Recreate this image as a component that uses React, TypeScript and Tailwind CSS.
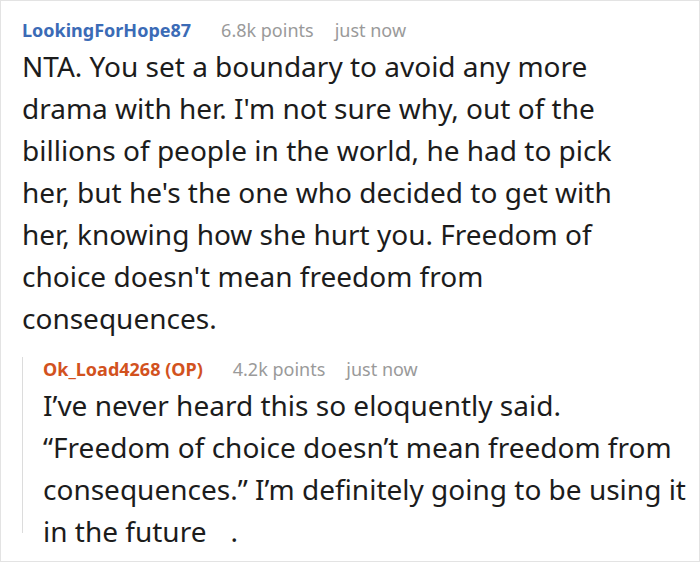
const first = [
  "NTA. You set a boundary to avoid any more",
  "drama with her. I'm not sure why, out of the",
  "billions of people in the world, he had to pick",
  "her, but he's the one who decided to get with",
  "her, knowing how she hurt you. Freedom of",
  "choice doesn't mean freedom from",
  "consequences.",
]

const reply = [
  "I’ve never heard this so eloquently said.",
  "“Freedom of choice doesn’t mean freedom from",
  "consequences.” I’m definitely going to be using it",
]

const Meta = ({ name, color, points }: { name: string; color: string; points: string }) => (
  <div className="flex items-center text-[18px] leading-[24px] whitespace-nowrap">
    <span className={`font-bold ${color}`}>{name}</span>
    <span className="ml-[30px] text-[#9a9a9a]">{points}</span>
    <span className="ml-[21px] text-[#9a9a9a]">just now</span>
  </div>
)

export default function App() {
  return (
    <div
      className="w-[700px] h-[562px] overflow-hidden bg-white border border-[#e3e3e3] pl-[21px] pt-[17px] text-[#1c1c1c]"
      style={{ fontFamily: '"Noto Sans", "Open Sans", sans-serif' }}
    >
      <Meta name="LookingForHope87" color="text-[#3b6bb6]" points="6.8k points" />
      <div className="mt-[3px] text-[28px] leading-[42px]">
        {first.map((l) => (
          <div key={l} className="whitespace-nowrap">{l}</div>
        ))}
      </div>

      {/* reply thread, left rule */}
      <div className="mt-[29px] h-[176px] border-l border-[#dcdcdc] pl-[20px]">
        <div className="-mt-[11px]">
          <Meta name="Ok_Load4268 (OP)" color="text-[#d2521e]" points="4.2k points" />
        </div>
        <div className="mt-[3px] text-[28px] leading-[42px]">
          {reply.map((l) => (
            <div key={l} className="whitespace-nowrap">{l}</div>
          ))}
          <div className="whitespace-nowrap">
            in the future<span className="inline-block w-[24px]" />.
          </div>
        </div>
      </div>
    </div>
  )
}
